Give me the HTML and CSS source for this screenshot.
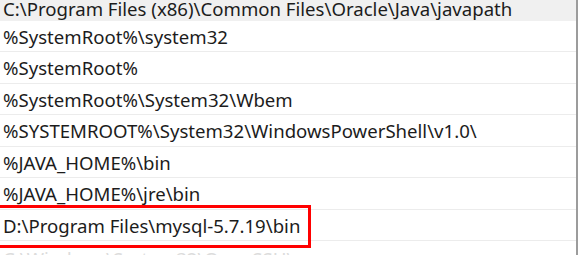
FILE: index.html
```html
<!DOCTYPE html>
<html lang="en">
<head>
    <meta charset="UTF-8">
    <title>Path</title>
    <link rel="stylesheet" href="styles.css">
</head>
<body>

<div class="panel">
    <ul class="paths">
        <li class="selected">C:\Program Files (x86)\Common Files\Oracle\Java\javapath</li>
        <li>%SystemRoot%\system32</li>
        <li>%SystemRoot%</li>
        <li>%SystemRoot%\System32\Wbem</li>
        <li>%SYSTEMROOT%\System32\WindowsPowerShell\v1.0\</li>
        <li>%JAVA_HOME%\bin</li>
        <li>%JAVA_HOME%\jre\bin</li>
        <li>D:\Program Files\mysql-5.7.19\bin</li>
        <li class="faded">C:\Windows\System32\OpenSSH\</li>
    </ul>
    <div class="mark"></div>
</div>

</body>
</html>
```

FILE: styles.css
```css
body {
    margin: 0;
    padding: 0;
    background-color: #fff;
    font-family: "Noto Sans", "Open Sans", sans-serif;
}

.panel {
    position: relative;
    width: 576px;
    height: 255px;
    overflow: hidden;
    border-right: 2px solid #9c9c9c;
}

.paths {
    list-style: none;
    margin: -11px 0 0 0;
    padding: 0;
}

.paths li {
    height: 30.5px;
    line-height: 31px;
    padding-left: 3px;
    border-bottom: 1px solid #ececec;
    font-size: 18.6px;
    color: #1c1c1c;
    white-space: nowrap;
}

.paths li.selected {
    background-color: #f0f0f0;
    border-bottom-color: #f0f0f0;
    line-height: 39px;
}

.paths li.faded {
    color: #dcdcdc;
    line-height: 36px;
}

/* red annotation round the mysql row */
.mark {
    position: absolute;
    left: -4px;
    top: 205px;
    width: 309px;
    height: 37px;
    border: 3px solid #f00;
}
```
